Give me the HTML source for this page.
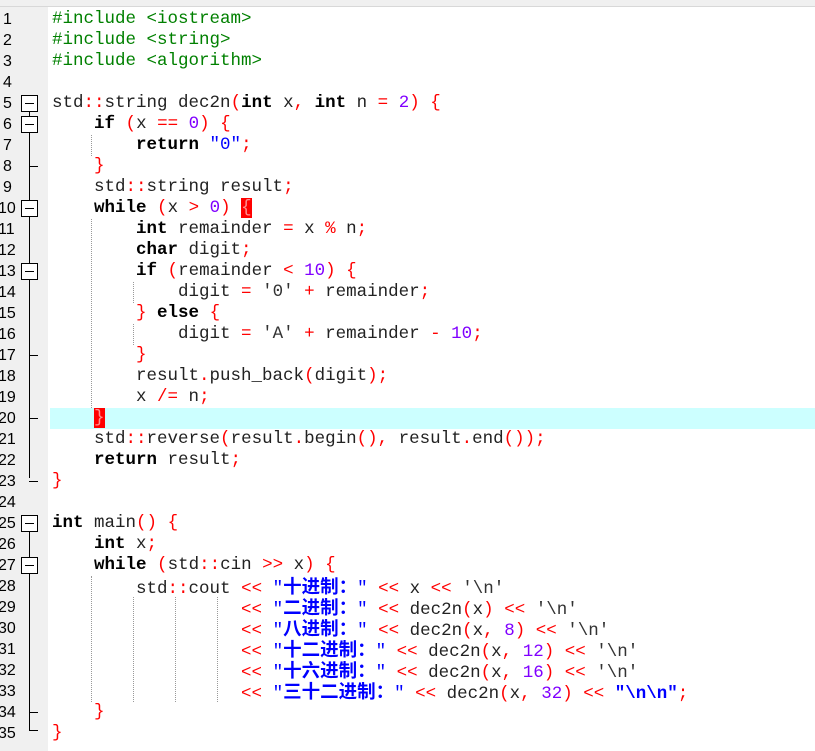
<!DOCTYPE html>
<html><head><meta charset="utf-8"><style>
body{margin:0;width:815px;height:751px;background:#fff;overflow:hidden;position:relative;font-family:"Liberation Mono",monospace;}
#tab{position:absolute;left:0;top:0;width:815px;height:6px;background:#f0f0f0;border-bottom:1px solid #d8d8d8;}
#gut{position:absolute;left:0;top:7px;width:48px;height:744px;background:#f0f0f0;}
.hl{position:absolute;left:50px;top:408px;width:765px;height:21px;background:#ccffff;}
.ln{position:absolute;left:3px;font-size:16px;line-height:21px;color:#000;font-family:"Liberation Sans",sans-serif;}
.row{position:absolute;left:52px;white-space:pre;font-size:17.5px;line-height:21px;color:#222;}
.k{font-weight:bold;color:#000}
.o{color:#f00}
.n{color:#8000ff}
.s{color:#00f}
.p{color:#008000}
.c{color:#333}
.cj{font-family:"Noto Sans CJK SC",sans-serif;font-weight:bold;font-size:18.5px;color:#00f}
.br{background:#f00;color:#ff9090}
.g{position:absolute;width:0;border-left:1px dotted #999;}
.box{position:absolute;left:21px;width:15px;height:15px;border:1px solid #000;background:#fff;}
.box:after{content:"";position:absolute;left:3px;right:3px;top:7px;height:1px;background:#000;}
.vl{position:absolute;left:29px;width:1px;background:#000;}
.tk{position:absolute;left:29px;width:9px;height:1px;background:#000;}
</style></head><body>
<div id="tab"></div>
<div id="gut"></div>
<div class="hl"></div>
<div class="ln" style="top:9px">1</div><div class="ln" style="top:30px">2</div><div class="ln" style="top:51px">3</div><div class="ln" style="top:72px">4</div><div class="ln" style="top:93px">5</div><div class="ln" style="top:114px">6</div><div class="ln" style="top:135px">7</div><div class="ln" style="top:156px">8</div><div class="ln" style="top:177px">9</div><div class="ln" style="top:198px;left:-2px">10</div><div class="ln" style="top:219px;left:-2px">11</div><div class="ln" style="top:240px;left:-2px">12</div><div class="ln" style="top:261px;left:-2px">13</div><div class="ln" style="top:282px;left:-2px">14</div><div class="ln" style="top:303px;left:-2px">15</div><div class="ln" style="top:324px;left:-2px">16</div><div class="ln" style="top:345px;left:-2px">17</div><div class="ln" style="top:366px;left:-2px">18</div><div class="ln" style="top:387px;left:-2px">19</div><div class="ln" style="top:408px;left:-2px">20</div><div class="ln" style="top:429px;left:-2px">21</div><div class="ln" style="top:450px;left:-2px">22</div><div class="ln" style="top:471px;left:-2px">23</div><div class="ln" style="top:492px;left:-2px">24</div><div class="ln" style="top:513px;left:-2px">25</div><div class="ln" style="top:534px;left:-2px">26</div><div class="ln" style="top:555px;left:-2px">27</div><div class="ln" style="top:576px;left:-2px">28</div><div class="ln" style="top:597px;left:-2px">29</div><div class="ln" style="top:618px;left:-2px">30</div><div class="ln" style="top:639px;left:-2px">31</div><div class="ln" style="top:660px;left:-2px">32</div><div class="ln" style="top:681px;left:-2px">33</div><div class="ln" style="top:702px;left:-2px">34</div><div class="ln" style="top:723px;left:-2px">35</div>

<div class="vl" style="top:111px;height:367px"></div>
<div class="vl" style="top:531px;height:199px"></div>
<div class="tk" style="top:166px"></div><div class="tk" style="top:355px"></div><div class="tk" style="top:418px"></div><div class="tk" style="top:481px"></div>
<div class="tk" style="top:712px"></div><div class="tk" style="top:730px"></div>
<div class="box" style="top:95px"></div><div class="box" style="top:116px"></div><div class="box" style="top:200px"></div><div class="box" style="top:263px"></div><div class="box" style="top:515px"></div><div class="box" style="top:557px"></div>

<div class="g" style="left:91px;top:135px;height:21px"></div>
<div class="g" style="left:91px;top:219px;height:189px"></div>
<div class="g" style="left:133px;top:282px;height:21px"></div>
<div class="g" style="left:133px;top:324px;height:21px"></div>
<div class="g" style="left:91px;top:576px;height:126px"></div>
<div class="g" style="left:133px;top:597px;height:105px"></div>
<div class="g" style="left:175px;top:597px;height:105px"></div>
<div class="g" style="left:217px;top:597px;height:105px"></div>

<div class="row" style="top:9px"><span class="p">#include &lt;iostream&gt;</span></div>
<div class="row" style="top:30px"><span class="p">#include &lt;string&gt;</span></div>
<div class="row" style="top:51px"><span class="p">#include &lt;algorithm&gt;</span></div>
<div class="row" style="top:93px">std<span class="o">::</span>string dec2n<span class="o">(</span><span class="k">int</span> x<span class="o">,</span> <span class="k">int</span> n <span class="o">=</span> <span class="n">2</span><span class="o">)</span> <span class="o">{</span></div>
<div class="row" style="top:114px">    <span class="k">if</span> <span class="o">(</span>x <span class="o">==</span> <span class="n">0</span><span class="o">)</span> <span class="o">{</span></div>
<div class="row" style="top:135px">        <span class="k">return</span> <span class="s">"0"</span><span class="o">;</span></div>
<div class="row" style="top:156px">    <span class="o">}</span></div>
<div class="row" style="top:177px">    std<span class="o">::</span>string result<span class="o">;</span></div>
<div class="row" style="top:198px">    <span class="k">while</span> <span class="o">(</span>x <span class="o">&gt;</span> <span class="n">0</span><span class="o">)</span> <span class="br">{</span></div>
<div class="row" style="top:219px">        <span class="k">int</span> remainder <span class="o">=</span> x <span class="o">%</span> n<span class="o">;</span></div>
<div class="row" style="top:240px">        <span class="k">char</span> digit<span class="o">;</span></div>
<div class="row" style="top:261px">        <span class="k">if</span> <span class="o">(</span>remainder <span class="o">&lt;</span> <span class="n">10</span><span class="o">)</span> <span class="o">{</span></div>
<div class="row" style="top:282px">            digit <span class="o">=</span> <span class="c">'0'</span> <span class="o">+</span> remainder<span class="o">;</span></div>
<div class="row" style="top:303px">        <span class="o">}</span> <span class="k">else</span> <span class="o">{</span></div>
<div class="row" style="top:324px">            digit <span class="o">=</span> <span class="c">'A'</span> <span class="o">+</span> remainder <span class="o">-</span> <span class="n">10</span><span class="o">;</span></div>
<div class="row" style="top:345px">        <span class="o">}</span></div>
<div class="row" style="top:366px">        result<span class="o">.</span>push_back<span class="o">(</span>digit<span class="o">);</span></div>
<div class="row" style="top:387px">        x <span class="o">/=</span> n<span class="o">;</span></div>
<div class="row" style="top:408px">    <span class="br">}</span></div>
<div class="row" style="top:429px">    std<span class="o">::</span>reverse<span class="o">(</span>result<span class="o">.</span>begin<span class="o">(),</span> result<span class="o">.</span>end<span class="o">());</span></div>
<div class="row" style="top:450px">    <span class="k">return</span> result<span class="o">;</span></div>
<div class="row" style="top:471px"><span class="o">}</span></div>
<div class="row" style="top:513px"><span class="k">int</span> main<span class="o">()</span> <span class="o">{</span></div>
<div class="row" style="top:534px">    <span class="k">int</span> x<span class="o">;</span></div>
<div class="row" style="top:555px">    <span class="k">while</span> <span class="o">(</span>std<span class="o">::</span>cin <span class="o">&gt;&gt;</span> x<span class="o">)</span> <span class="o">{</span></div>
<div class="row" style="top:576px">        std<span class="o">::</span>cout <span class="o">&lt;&lt;</span> <span class="s">"<span class="cj">十进制：</span>" </span><span class="o">&lt;&lt;</span> x <span class="o">&lt;&lt;</span> <span class="c">'\n'</span></div>
<div class="row" style="top:597px">                  <span class="o">&lt;&lt;</span> <span class="s">"<span class="cj">二进制：</span>" </span><span class="o">&lt;&lt;</span> dec2n<span class="o">(</span>x<span class="o">)</span> <span class="o">&lt;&lt;</span> <span class="c">'\n'</span></div>
<div class="row" style="top:618px">                  <span class="o">&lt;&lt;</span> <span class="s">"<span class="cj">八进制：</span>" </span><span class="o">&lt;&lt;</span> dec2n<span class="o">(</span>x<span class="o">,</span> <span class="n">8</span><span class="o">)</span> <span class="o">&lt;&lt;</span> <span class="c">'\n'</span></div>
<div class="row" style="top:639px">                  <span class="o">&lt;&lt;</span> <span class="s">"<span class="cj">十二进制：</span>" </span><span class="o">&lt;&lt;</span> dec2n<span class="o">(</span>x<span class="o">,</span> <span class="n">12</span><span class="o">)</span> <span class="o">&lt;&lt;</span> <span class="c">'\n'</span></div>
<div class="row" style="top:660px">                  <span class="o">&lt;&lt;</span> <span class="s">"<span class="cj">十六进制：</span>" </span><span class="o">&lt;&lt;</span> dec2n<span class="o">(</span>x<span class="o">,</span> <span class="n">16</span><span class="o">)</span> <span class="o">&lt;&lt;</span> <span class="c">'\n'</span></div>
<div class="row" style="top:681px">                  <span class="o">&lt;&lt;</span> <span class="s">"<span class="cj">三十二进制：</span>" </span><span class="o">&lt;&lt;</span> dec2n<span class="o">(</span>x<span class="o">,</span> <span class="n">32</span><span class="o">)</span> <span class="o">&lt;&lt;</span> <span class="s" style="font-weight:bold">"\n\n"</span><span class="o">;</span></div>
<div class="row" style="top:702px">    <span class="o">}</span></div>
<div class="row" style="top:723px"><span class="o">}</span></div>
</body></html>
